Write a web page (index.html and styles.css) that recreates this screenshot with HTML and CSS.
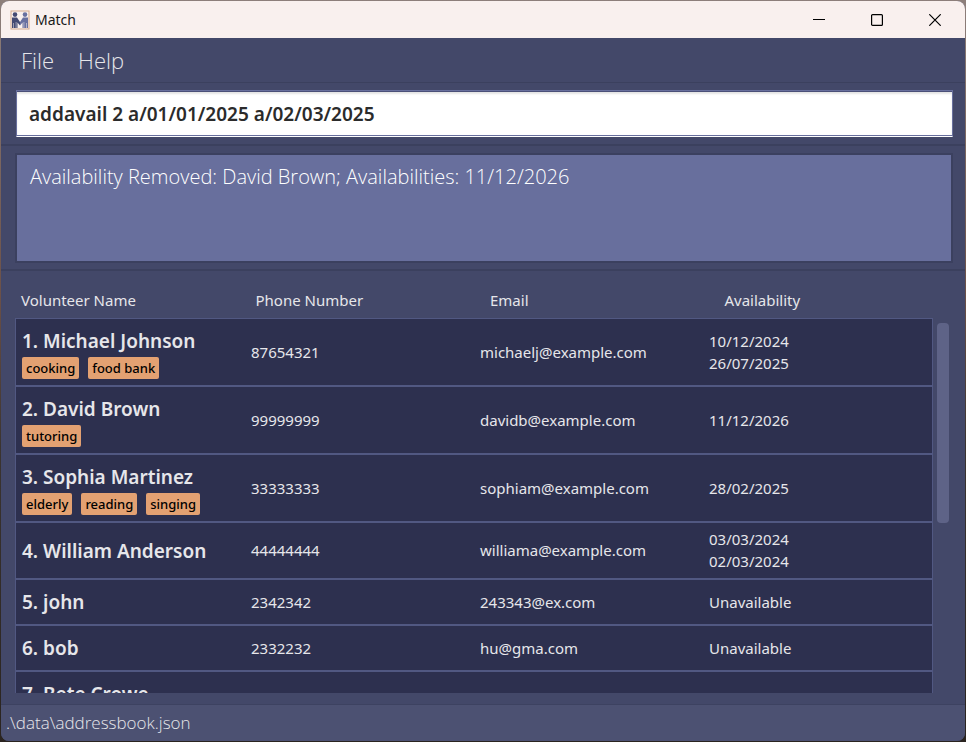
FILE: index.html
```html
<!DOCTYPE html>
<html lang="en">
<head>
<meta charset="utf-8">
<title>Match</title>
<link rel="stylesheet" href="styles.css">
</head>
<body>
<main class="window">
  <header class="titlebar">
    <svg class="logo" viewBox="0 0 20 20" aria-hidden="true">
      <rect x="1" y="1" width="18" height="18" fill="#f9f0ee" stroke="#d3a98d"/>
      <path d="M2 7.500h5l3 4.500v3.500l-2.500-3V18H6.300v-6h-.5v6H4v-5h-.5v5H2z" fill="#444a73"/>
      <path d="M18 7.500h-5L10 12v3.500l2.500-3V18h1.200v-6h.5v6H16v-5h.5v5H18z" fill="#6870a0"/>
      <circle cx="5" cy="4.600" r="2.300" fill="#444a73"/>
      <circle cx="15" cy="4.600" r="2.300" fill="#6870a0"/>
    </svg>
    <h1 class="title">Match</h1>
    <div class="controls">
      <button type="button" aria-label="Minimize"><svg viewBox="0 0 12 12"><path d="M0 5.500h12"/></svg></button>
      <button type="button" aria-label="Maximize"><svg viewBox="0 0 12 12"><rect x=".6" y=".6" width="10.800" height="10.800" rx="1"/></svg></button>
      <button type="button" aria-label="Close"><svg viewBox="0 0 12 12"><path d="M.3.3l11.400 11.400M11.700.3L.3 11.700"/></svg></button>
    </div>
  </header>
  <nav class="menu">
    <button type="button">File</button>
    <button type="button">Help</button>
  </nav>
  <form class="command">
    <input type="text" aria-label="Command" value="addavail 2 a/01/01/2025 a/02/03/2025">
  </form>
  <section class="result">
    <textarea aria-label="Result" readonly>Availability Removed: David Brown; Availabilities: 11/12/2026</textarea>
  </section>
  <section class="list">
    <table role="table">
      <thead role="rowgroup">
        <tr role="row"><th role="columnheader">Volunteer Name</th><th role="columnheader">Phone Number</th><th role="columnheader">Email</th><th role="columnheader">Availability</th></tr>
      </thead>
      <tbody role="rowgroup">
        <tr role="row"><td role="cell"><div class="name">1. Michael Johnson</div><div class="tags"><span>cooking</span><span>food bank</span></div></td><td role="cell">87654321</td><td role="cell">michaelj@example.com</td><td role="cell">10/12/2024<br>26/07/2025</td></tr>
        <tr role="row"><td role="cell"><div class="name">2. David Brown</div><div class="tags"><span>tutoring</span></div></td><td role="cell">99999999</td><td role="cell">davidb@example.com</td><td role="cell">11/12/2026</td></tr>
        <tr role="row"><td role="cell"><div class="name">3. Sophia Martinez</div><div class="tags"><span>elderly</span><span>reading</span><span>singing</span></div></td><td role="cell">33333333</td><td role="cell">sophiam@example.com</td><td role="cell">28/02/2025</td></tr>
        <tr role="row"><td role="cell"><div class="name">4. William Anderson</div></td><td role="cell">44444444</td><td role="cell">williama@example.com</td><td role="cell">03/03/2024<br>02/03/2024</td></tr>
        <tr role="row"><td role="cell"><div class="name">5. john</div></td><td role="cell">2342342</td><td role="cell">243343@ex.com</td><td role="cell">Unavailable</td></tr>
        <tr role="row"><td role="cell"><div class="name">6. bob</div></td><td role="cell">2332232</td><td role="cell">hu@gma.com</td><td role="cell">Unavailable</td></tr>
        <tr role="row"><td role="cell"><div class="name">7. Bete Crowe</div></td><td role="cell"></td><td role="cell"></td><td role="cell"></td></tr>
      </tbody>
    </table>
    <div class="scrollbar"><div class="thumb"></div></div>
  </section>
  <footer class="status">.\data\addressbook.json</footer>
</main>
</body>
</html>
```
FILE: styles.css
```css
* {
  box-sizing: border-box;
}

body {
  margin: 0;
  height: 100vh;
  padding: 1px;
  background: linear-gradient(#8d7f7b, #6b5048 40%, #3b3430 60%, #2a2420);
  font-family: "Noto Sans", "Open Sans", sans-serif;
  font-size: 15px;
  color: #e6e6ea;
}

button,
input,
textarea {
  font: inherit;
  color: inherit;
}

button {
  border: 0;
  padding: 0;
  background: none;
}

.window {
  height: 100%;
  display: flex;
  flex-direction: column;
  overflow: hidden;
  border-radius: 8px;
  background: #434869;
}

.titlebar {
  display: flex;
  align-items: center;
  height: 37px;
  padding: 0 1px 0 9px;
  background: #f9f0ee;
  color: #1a1a1a;
}

.logo {
  width: 20px;
  height: 20px;
}

.title {
  margin: 0 auto 0 5px;
  font-size: 14px;
  font-weight: 400;
}

.controls {
  display: flex;
}

.controls button {
  display: grid;
  place-items: center;
  width: 58px;
  height: 36px;
}

.controls svg {
  width: 12px;
  height: 12px;
  fill: none;
  stroke: #000;
  stroke-width: 1.2;
}

.menu,
.result textarea,
.status {
  font-family: "Open Sans", "Noto Sans", sans-serif;
  font-weight: 300;
}

.menu {
  display: flex;
  gap: 24px;
  height: 45px;
  padding: 0 20px 1px;
  border-bottom: 1px solid #3b405e;
  font-size: 22px;
}

.menu button {
  line-height: 42px;
}

.command {
  padding: 7px 12px 7px 15px;
  border-bottom: 2px solid #3b405e;
}

.command input {
  display: block;
  width: 100%;
  height: 47px;
  padding: 0 12px;
  border: 1px solid #686f9d;
  border-bottom-color: #fff;
  background: #fff;
  box-shadow: inset 0 1px #4b5078, inset 0 -1px #686f9d, inset 0 3px 2px #e4e4e4;
  font-size: 19px;
  font-weight: 600;
  color: #2b2b2b;
}

.result {
  padding: 7px 12px 6px 14px;
  border-bottom: 2px solid #3b405e;
}

.result textarea {
  display: block;
  width: 100%;
  height: 110px;
  padding: 7px 13px;
  resize: none;
  border: 2px solid #3b405f;
  background: #686f9d;
  font-size: 20px;
  line-height: 30px;
  color: #fff;
}

.list {
  flex: 1;
  min-height: 0;
  display: grid;
  grid-template: auto 1fr / 1fr 12px;
  column-gap: 4px;
  padding: 0 16px 11px 14px;
}

.list table {
  display: contents;
}

thead {
  display: block;
  grid-column: 1 / 3;
  margin-right: -10px;
  padding: 11px 0 0 6px;
}

.list tr {
  display: grid;
  grid-template-columns: repeat(4, 1fr);
}

th {
  padding: 0;
  font-weight: 400;
  line-height: 36px;
  text-align: left;
}

tbody {
  display: block;
  overflow: hidden;
  background: #2d304f;
}

tbody tr {
  border: 1px solid #515882;
}

td {
  align-self: center;
  padding: 5px 0 6px 6px;
  line-height: 22px;
}

td:first-child {
  padding: 6px 0 6px 6px;
}

.name {
  font-size: 19px;
  font-weight: 600;
  line-height: 32px;
}

.tags {
  display: flex;
  gap: 9px;
}

.tags span {
  padding: 0 4px;
  border-radius: 2px;
  background: #e3a172;
  font-size: 13px;
  font-weight: 500;
  color: #000;
}

.scrollbar {
  padding-top: 5px;
}

.thumb {
  height: 54%;
  border-radius: 4px;
  background: #5e6387;
}

.status {
  height: 37px;
  padding-left: 5px;
  border-top: 1px solid #3d4261;
  background: #4c5172;
  font-size: 17px;
  line-height: 36px;
}
```
